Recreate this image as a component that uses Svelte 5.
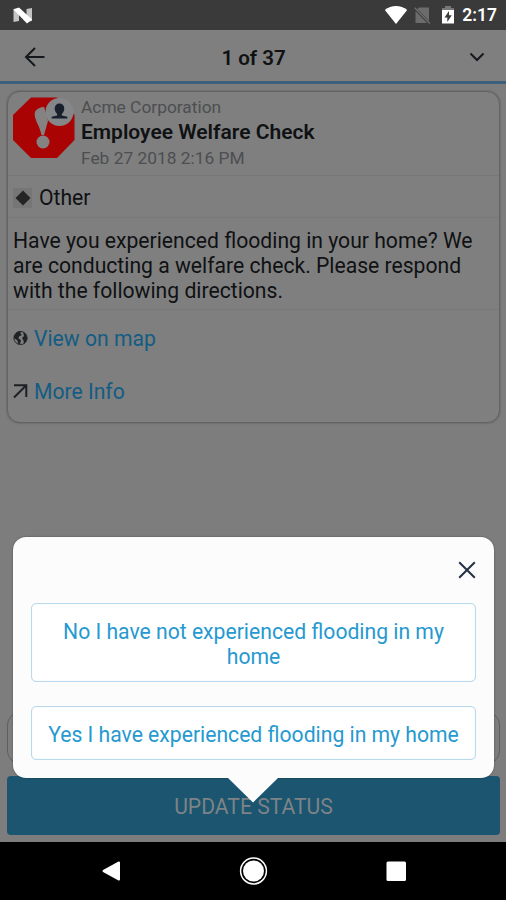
<script>
  const alert = {
    org: 'Acme Corporation',
    title: 'Employee Welfare Check',
    date: 'Feb 27 2018 2:16 PM',
    category: 'Other',
    message:
      'Have you experienced flooding in your home? We are conducting a welfare check. Please respond with the following directions.',
  }
  const responses = [
    'No I have not experienced flooding in my home',
    'Yes I have experienced flooding in my home',
  ]
  let open = true
</script>

<div class="screen">
  <div class="status">
    <svg class="nougat" width="20" height="17" viewBox="0 0 20 17">
      <path d="M.5 2l5.500-1v13l-5.500 1z" fill="#c4c4c4" />
      <path d="M13.500 2l5.500-1v13l-5.500 1z" fill="#c4c4c4" />
      <path d="M.5 2.500L6 .5l13 12-5 4z" fill="#fff" />
    </svg>
    <svg class="wifi" width="24" height="20" viewBox="0 0 24 20">
      <path d="M12 19L.8 5C4 2.300 8 1 12 1s8 1.300 11.200 4z" fill="#fff" />
    </svg>
    <svg class="sim" width="17" height="19" viewBox="0 0 17 19">
      <path d="M5 1.500h10v13.500L3.500 3z M1.500 5L13 17H1.500z" fill="#6c6c6c" />
      <path d="M.8 1.800l15 15.700" stroke="#6c6c6c" stroke-width="1.600" />
    </svg>
    <svg class="battery" width="14" height="20" viewBox="0 0 14 20">
      <path d="M4 1h6v2h3v3H1V3h3z" fill="#777" />
      <path d="M1 5h12v13.500H1z" fill="#fff" />
      <path d="M8 6l-4.500 6.500h2.800V17l4.500-6.700H8z" fill="#3a3a3a" />
    </svg>
    <span>2:17</span>
  </div>

  <header>
    <svg width="22" height="22" viewBox="0 0 22 22">
      <path d="M20.500 11H2.500M11 2l-9 9 9 9" />
    </svg>
    <h1>1 of 37</h1>
    <svg width="16" height="12" viewBox="0 0 16 12">
      <path d="M1.500 2.500L8 9l6.500-6.500" />
    </svg>
  </header>

  <main>
    <article>
      <div class="summary">
        <svg width="64" height="64" viewBox="0 0 64 64">
          <path d="M19 1.500h26L62.500 19v25L45 62H19L1 44V19z" fill="#a90304" />
          <path d="M23 16c1-3 6-5 9-5l2 6 2 8-4 14h-2.500C28 30 21 22 23 16z" fill="#858282" />
          <circle cx="31" cy="46" r="6.500" fill="#858282" />
          <circle cx="47.500" cy="16" r="14" fill="#848688" />
          <path
            d="M47.500 7.500c3 0 4.800 2 4.800 5 0 2.500-1.300 4.500-2.500 5.500v1.500l5.500 1.300v1.700H39.700v-1.700l5.500-1.300V18c-1.200-1-2.500-3-2.500-5.500 0-3 1.800-5 4.800-5z"
            fill="#18212b"
          />
        </svg>
        <div>
          <p class="org">{alert.org}</p>
          <h2>{alert.title}</h2>
          <p class="date">{alert.date}</p>
        </div>
      </div>
      <div class="category">
        <span class="badge">
          <svg width="19" height="20" viewBox="0 0 19 20">
            <path d="M10 2.500l7.500 7.500-7.500 7.500L2.500 10z" fill="#242424" />
          </svg>
        </span>
        {alert.category}
      </div>
      <p class="message">{alert.message}</p>
      <div class="links">
        <a href="#map">
          <svg width="15" height="16" viewBox="0 0 15 16">
            <circle cx="7.500" cy="8" r="6.600" fill="none" stroke="#25282b" stroke-width="1" />
            <path d="M1 6l3-4 4-.8-.5 2.300L9 5 6 6.500l-.5 2L8 10l-1 4.500-2-1-.5-3L1 8z" fill="#202326" />
            <path d="M10 2l3 2 1.200 4-1 3.500L11 14l-.5-3.500L9 8l2-2z" fill="#202326" />
          </svg>
          View on map
        </a>
        <a href="#info">
          <svg width="15" height="16" viewBox="0 0 15 16">
            <path d="M1 2.200h12.300V14M13.300 2.200L1 14.500" fill="none" stroke="#1c2024" stroke-width="2" />
          </svg>
          More Info
        </a>
      </div>
    </article>

    <div class="reply"></div>
    <button class="update">UPDATE STATUS</button>
  </main>

  <nav>
    <svg width="22" height="24" viewBox="0 0 22 24">
      <path d="M18 3.500v17L2.500 12z" fill="#fff" stroke="#fff" stroke-width="2" stroke-linejoin="round" />
    </svg>
    <svg width="30" height="30" viewBox="0 0 30 30">
      <circle cx="14.500" cy="15" r="12.900" fill="none" stroke="#fff" stroke-width="1.500" />
      <circle cx="14.500" cy="15" r="10.500" fill="#fff" />
    </svg>
    <svg width="22" height="22" viewBox="0 0 22 22">
      <rect x="1.500" y="1.500" width="19.500" height="19.500" rx="1.500" fill="#fff" />
    </svg>
  </nav>

  {#if open}
    <div class="popup">
      <button class="close" aria-label="Close" on:click={() => (open = false)}>
        <svg width="18" height="18" viewBox="0 0 18 18">
          <path d="M1.200 1.200l15.600 15.600M16.800 1.200L1.200 16.800" stroke="#243044" stroke-width="2" />
        </svg>
      </button>
      {#each responses as response}
        <button class="response">{response}</button>
      {/each}
      <svg class="pointer" width="52" height="26" viewBox="0 0 52 26">
        <path d="M0 0h52v1h-1L26 25.500 1 1H0z" fill="#fcfcfc" />
      </svg>
    </div>
  {/if}
</div>

<style>
  :global(body) {
    margin: 0;
  }
  .screen {
    position: relative;
    display: flex;
    flex-direction: column;
    width: 506px;
    height: 900px;
    overflow: hidden;
    background: #7d7d7d;
    color: #0f1113;
    font-family: Roboto, sans-serif;
    font-size: 21.150px;
  }
  h1,
  h2,
  p {
    margin: 0;
    font-weight: 400;
  }
  svg {
    display: block;
    flex: none;
  }
  button {
    padding: 0;
    font: inherit;
    cursor: pointer;
  }
  .status {
    display: flex;
    align-items: center;
    height: 30px;
    padding: 0 9px 0 13px;
    background: #3a3a3a;
    color: #fff;
    font-size: 17.500px;
    font-weight: 600;
  }
  .wifi {
    margin-left: auto;
  }
  .sim {
    margin-left: 6px;
  }
  .battery {
    margin: 0 7px 0 10px;
  }
  header {
    display: flex;
    align-items: center;
    justify-content: space-between;
    height: 54px;
    padding: 3px 21px 0 24px;
    box-sizing: border-box;
    border-bottom: 3px solid #3c5f7b;
    background: #7f7f7f;
  }
  header path {
    fill: none;
    stroke: #15191e;
    stroke-width: 2;
  }
  h1 {
    margin: 2px 8px 0 0;
    font-size: 20.500px;
    font-weight: 600;
  }
  main {
    display: flex;
    flex: 1;
    flex-direction: column;
    padding: 7px 6px 7px 7px;
  }
  article {
    height: 330px;
    border: 1px solid #636363;
    border-radius: 13px;
    background: #7f7f7f;
    box-shadow: 0 0 1px 0.5px #707070;
  }
  .summary {
    display: flex;
    gap: 5px;
    height: 83px;
    padding-left: 4px;
    border-bottom: 1px solid #777879;
  }
  .summary svg {
    margin-top: 4px;
  }
  .org,
  .date {
    color: #4c4e50;
    font-size: 17.350px;
    line-height: 25px;
  }
  .org {
    margin-top: 3px;
  }
  h2 {
    margin-top: -1px;
    font-size: 21px;
    font-weight: 600;
    line-height: 27px;
  }
  .category {
    display: flex;
    align-items: center;
    gap: 7px;
    height: 42px;
    padding: 2px 0 0 5px;
    box-sizing: border-box;
    border-bottom: 1px solid #777879;
  }
  .badge {
    background: #767676;
  }
  .message {
    height: 92px;
    padding: 10px 0 0 5px;
    box-sizing: border-box;
    border-bottom: 1px solid #777879;
    line-height: 25px;
  }
  .links {
    display: flex;
    flex-direction: column;
    gap: 28px;
    padding: 16px 0 0 5px;
  }
  a {
    display: flex;
    align-items: center;
    gap: 6px;
    color: #135c83;
    line-height: 25px;
    text-decoration: none;
  }
  a svg {
    margin-top: -2px;
  }
  .reply {
    height: 50px;
    margin-top: auto;
    border: 1px solid #5e5e5e;
    border-radius: 13px;
  }
  .update {
    height: 59px;
    margin-top: 12px;
    padding-top: 1px;
    border: 0;
    border-radius: 4px;
    background: #1b556f;
    color: #7d8387;
  }
  nav {
    display: flex;
    align-items: center;
    justify-content: space-between;
    height: 58px;
    padding: 0 99px 0 101px;
    background: #000;
  }
  .popup {
    position: absolute;
    top: 537px;
    left: 13px;
    display: flex;
    flex-direction: column;
    gap: 24px;
    width: 481px;
    height: 241px;
    padding: 24px 18px 18px;
    box-sizing: border-box;
    border-radius: 13px;
    background: #fcfcfc;
    box-shadow: 0 0 2px rgba(0, 0, 0, 0.4);
  }
  .close {
    align-self: flex-end;
    border: 0;
    background: none;
  }
  .response {
    padding: 15px 12px 12px;
    border: 1px solid #b9d9ec;
    border-radius: 5px;
    background: #fff;
    box-shadow: inset 0 0 1px #b9d9ec;
    color: #2599d0;
    line-height: 25px;
  }
  .pointer {
    position: absolute;
    top: 240px;
    left: 214px;
  }
</style>
